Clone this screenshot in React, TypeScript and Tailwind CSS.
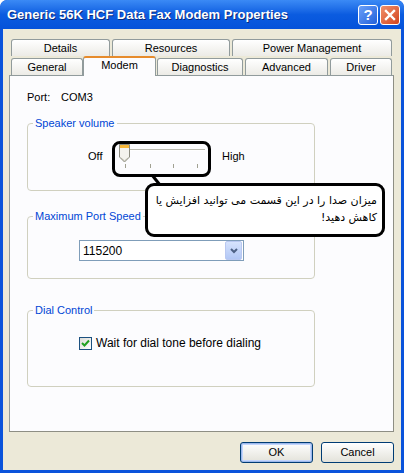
import React from 'react';

const font = { fontFamily: '"Liberation Sans", Arial, sans-serif' };

const Tab = ({ label, w }: { label: string; w: string }) => (
  <div
    className={`${w} h-[17px] flex items-center justify-center text-[11px] text-black border border-[#919B9C] border-b-0 rounded-t-[3px] bg-gradient-to-b from-[#FFFFFF] to-[#ECEBE6]`}
  >
    {label}
  </div>
);

const GroupBox = ({ title, h, children }: { title: string; h: string; children?: React.ReactNode }) => (
  <fieldset className={`${h} w-[288px] border border-[#D0D0BF] rounded-[4px] px-0`}>
    <legend className="ml-[5px] px-[2px] text-[11px] leading-[13px] text-[#0046D5]">{title}</legend>
    {children}
  </fieldset>
);

const Slider = () => (
  <svg width="92" height="26" viewBox="0 0 92 26">
    <line x1="8" y1="6.5" x2="90" y2="6.5" stroke="#B9B9AE" strokeWidth="1" />
    <line x1="8" y1="7.5" x2="90" y2="7.5" stroke="#FFFFFF" strokeWidth="1" />
    {[10, 35, 58, 82].map((x) => (
      <line key={x} x1={x + 0.5} y1="21" x2={x + 0.5} y2="25" stroke="#A1A192" strokeWidth="1" />
    ))}
    <path d="M4.5 1.5 H14.5 V14 L9.5 19 L4.5 14 Z" fill="#F4F3EE" stroke="#8C8C80" strokeWidth="1" />
    <rect x="5" y="2" width="9" height="3" fill="#F8B738" />
    <path d="M6 15 L9.5 18 L13 15" fill="none" stroke="#B0AFA0" strokeWidth="1" />
  </svg>
);

export default function App() {
  return (
    <div className="w-[404px] h-[473px] overflow-hidden bg-[#0A53DB] rounded-t-[7px] flex flex-col" style={font}>
      {/* Title bar */}
      <div className="h-[29px] shrink-0 flex items-center pl-[7px] pr-[4px] bg-gradient-to-b from-[#3B8AF5] via-[#0B5CE0] to-[#0552DA] rounded-t-[7px]">
        <span className="flex-1 text-white font-bold text-[13px] [text-shadow:1px_1px_0_#0A2A7A]">
          Generic 56K HCF Data Fax Modem Properties
        </span>
        <div className="flex gap-[2px] pt-[1px]">
          <div className="w-[20px] h-[20px] rounded-[3px] border border-white bg-gradient-to-br from-[#6BA0F8] to-[#2260DA] flex items-center justify-center text-white font-bold text-[15px]">
            ?
          </div>
          <div className="w-[20px] h-[20px] rounded-[3px] border border-white bg-gradient-to-br from-[#F0906A] to-[#D2411A] flex items-center justify-center">
            <svg width="12" height="12" viewBox="0 0 12 12">
              <path d="M2 2 L10 10 M10 2 L2 10" stroke="#fff" strokeWidth="2.4" strokeLinecap="square" />
            </svg>
          </div>
        </div>
      </div>

      {/* Body */}
      <div className="flex-1 mx-[3px] mb-[3px] bg-[#ECE9D8] flex flex-col relative">
        {/* Tabs */}
        <div className="pl-[8px] pt-[10px]">
          <div className="flex gap-[2px]">
            <Tab label="Details" w="w-[99px]" />
            <Tab label="Resources" w="w-[118px]" />
            <Tab label="Power Management" w="w-[160px]" />
          </div>
          <div className="flex items-end">
            <Tab label="General" w="w-[72px]" />
            <div className="w-[73px] h-[20px] -mb-px relative z-10 bg-[#FCFCFE] border border-[#919B9C] border-b-0 border-t-[#E68B2C] border-t-2 rounded-t-[3px] flex justify-center text-[11px] leading-[13px] pt-[1px]">
              Modem
            </div>
            <div className="ml-[1px]"><Tab label="Diagnostics" w="w-[86px]" /></div>
            <div className="ml-[2px]"><Tab label="Advanced" w="w-[83px]" /></div>
            <div className="ml-[2px]"><Tab label="Driver" w="w-[62px]" /></div>
          </div>
        </div>

        {/* Panel */}
        <div className="ml-[6px] w-[385px] h-[357px] bg-[#FCFCFE] border border-[#919B9C] border-r-[#8E8E84] border-b-[#8E8E84] pl-[17px] pt-[15px] flex flex-col text-[11px] text-black">
          <div className="flex leading-[13px]">
            <span className="w-[34px]">Port:</span>
            <span>COM3</span>
          </div>

          <div className="mt-[13px]">
            <GroupBox title="Speaker volume" h="h-[74px]">
              <div className="flex items-center pt-[13px] pl-[60px]">
                <span className="w-[27px]">Off</span>
                <Slider />
                <span className="ml-[15px]">High</span>
              </div>
            </GroupBox>
          </div>

          <div className="mt-[19px]">
            <GroupBox title="Maximum Port Speed" h="h-[69px]">
              <div className="pl-[51px] pt-[17px]">
                <div className="w-[165px] h-[21px] border border-[#7F9DB9] bg-white flex items-center">
                  <span className="flex-1 pl-[3px] text-[12px]">115200</span>
                  <div className="w-[17px] h-[19px] mr-px rounded-[2px] border border-[#B9C8F1] bg-gradient-to-b from-[#D6E3FD] to-[#B2C7F5] flex items-center justify-center">
                    <svg width="8" height="6" viewBox="0 0 8 6">
                      <path d="M1 1 L4 4 L7 1" fill="none" stroke="#4D6185" strokeWidth="2" />
                    </svg>
                  </div>
                </div>
              </div>
            </GroupBox>
          </div>

          <div className="mt-[25px]">
            <GroupBox title="Dial Control" h="h-[83px]">
              <div className="pl-[51px] pt-[17px] flex items-center">
                <div className="w-[13px] h-[13px] border border-[#1C5180] bg-gradient-to-br from-[#DCDCD7] to-white flex items-center justify-center">
                  <svg width="9" height="9" viewBox="0 0 9 9">
                    <path d="M1 4 L3.5 6.5 L8 1.5" fill="none" stroke="#21A121" strokeWidth="2" />
                  </svg>
                </div>
                <span className="ml-[4px] text-[12px]">Wait for dial tone before dialing</span>
              </div>
            </GroupBox>
          </div>
        </div>

        {/* Buttons */}
        <div className="flex justify-end gap-[8px] pr-[7px] pt-[10px]">
          <button className="w-[73px] h-[21px] rounded-[3px] border border-[#003C74] bg-gradient-to-b from-[#FFFFFF] to-[#E3E2DA] text-[11px] shadow-[inset_0_0_0_1px_#9DB9EB,inset_0_0_0_2px_#C3D5FD]">
            OK
          </button>
          <button className="w-[73px] h-[21px] rounded-[3px] border border-[#003C74] bg-gradient-to-b from-[#FFFFFF] to-[#E3E2DA] text-[11px]">
            Cancel
          </button>
        </div>

        {/* Annotation callout over the slider */}
        <div className="absolute left-[109px] top-[112px] w-[99px] h-[36px] border-[3px] border-black rounded-[8px]" />
        <svg className="absolute left-[147px] top-[145px]" width="14" height="12" viewBox="0 0 14 12">
          <line x1="2" y1="1" x2="10" y2="11" stroke="#000" strokeWidth="3" />
        </svg>
        <div
          dir="rtl"
          className="absolute left-[142px] top-[154px] w-[240px] h-[54px] border-[3px] border-black rounded-[9px] bg-white pl-[2px] pr-[5px] pt-[6px] text-[11px] leading-[17px] text-black whitespace-nowrap"
          style={{ fontFamily: '"DejaVu Sans", "Noto Sans", sans-serif' }}
        >
          میزان صدا را در این قسمت می توانید افزایش یا
          <br />
          کاهش دهید!
        </div>
      </div>
    </div>
  );
}
